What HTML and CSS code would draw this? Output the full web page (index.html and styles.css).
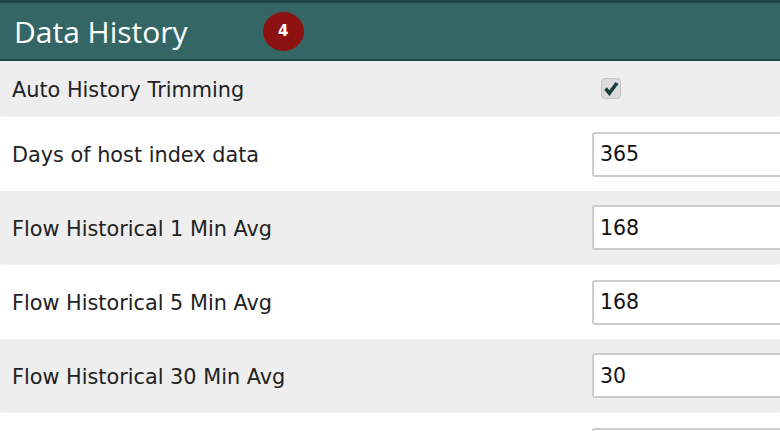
FILE: index.html
```html
<!DOCTYPE html>
<html>
<head>
<meta charset="utf-8">
<link rel="stylesheet" href="styles.css">
</head>
<body>
<div class="panel">
  <div class="panel-header">
    <h1 class="panel-title">Data History</h1>
    <span class="badge">4</span>
  </div>
  <div class="row row-alt row-first">
    <span class="label">Auto History Trimming</span>
    <span class="checkbox">
      <svg viewBox="0 0 20 20" width="20" height="20"><path d="M3 10 L7.5 15.5 L16.5 3.5" fill="none" stroke="#173f3f" stroke-width="4.2" stroke-linecap="butt" stroke-linejoin="miter"/></svg>
    </span>
  </div>
  <div class="row">
    <span class="label">Days of host index data</span>
    <span class="field">365</span>
  </div>
  <div class="row row-alt">
    <span class="label">Flow Historical 1 Min Avg</span>
    <span class="field">168</span>
  </div>
  <div class="row">
    <span class="label">Flow Historical 5 Min Avg</span>
    <span class="field">168</span>
  </div>
  <div class="row row-alt">
    <span class="label">Flow Historical 30 Min Avg</span>
    <span class="field">30</span>
  </div>
  <div class="row">
    <span class="label"></span>
    <span class="field"></span>
  </div>
</div>
</body>
</html>
```

FILE: styles.css
```css
html, body {
  margin: 0;
  padding: 0;
  overflow: hidden;
  background: #ffffff;
}
.panel {
  width: 900px;
  font-family: "DejaVu Sans", Verdana, sans-serif;
  color: #222222;
}
.panel-header {
  display: flex;
  align-items: center;
  height: 56px;
  border-top: 3px solid #1d4646;
  border-bottom: 2px solid #1d4646;
  background: #346666;
  padding-left: 14px;
}
.panel-title {
  margin: 0;
  font-family: "Open Sans", sans-serif;
  font-weight: 400;
  font-size: 30px;
  color: #ffffff;
  line-height: 1;
  position: relative;
  top: 1px;
}
.badge {
  display: flex;
  align-items: center;
  justify-content: center;
  width: 41px;
  height: 39px;
  margin-left: 75px;
  border-radius: 50%;
  background: #8c1212;
  color: #ffffff;
  font-family: "DejaVu Sans", sans-serif;
  font-weight: bold;
  font-size: 15px;
}
.row {
  display: grid;
  grid-template-columns: 580px 1fr;
  align-items: center;
  height: 74px;
  padding-left: 12px;
  box-sizing: border-box;
  font-size: 20.8px;
}
.row-alt {
  background: #eeeeee;
  border-bottom: 1px dotted #f8f8f8;
}
.row-first {
  height: 56px;
}
.label {
  white-space: nowrap;
  position: relative;
  top: 1px;
}
.checkbox {
  display: flex;
  align-items: center;
  justify-content: center;
  width: 20px;
  height: 21px;
  margin-left: 9px;
  border-radius: 4px;
  background: #dcdcdc;
  border: 1px solid #c4c4c4;
  box-sizing: border-box;
}
.checkbox svg {
  width: 17px;
  height: 17px;
}
.field {
  display: flex;
  align-items: center;
  height: 45px;
  width: 260px;
  box-sizing: border-box;
  border: 2px solid #cccccc;
  border-radius: 3px;
  background: #ffffff;
  padding-left: 6px;
  font-size: 20.5px;
  color: #111111;
}
```
